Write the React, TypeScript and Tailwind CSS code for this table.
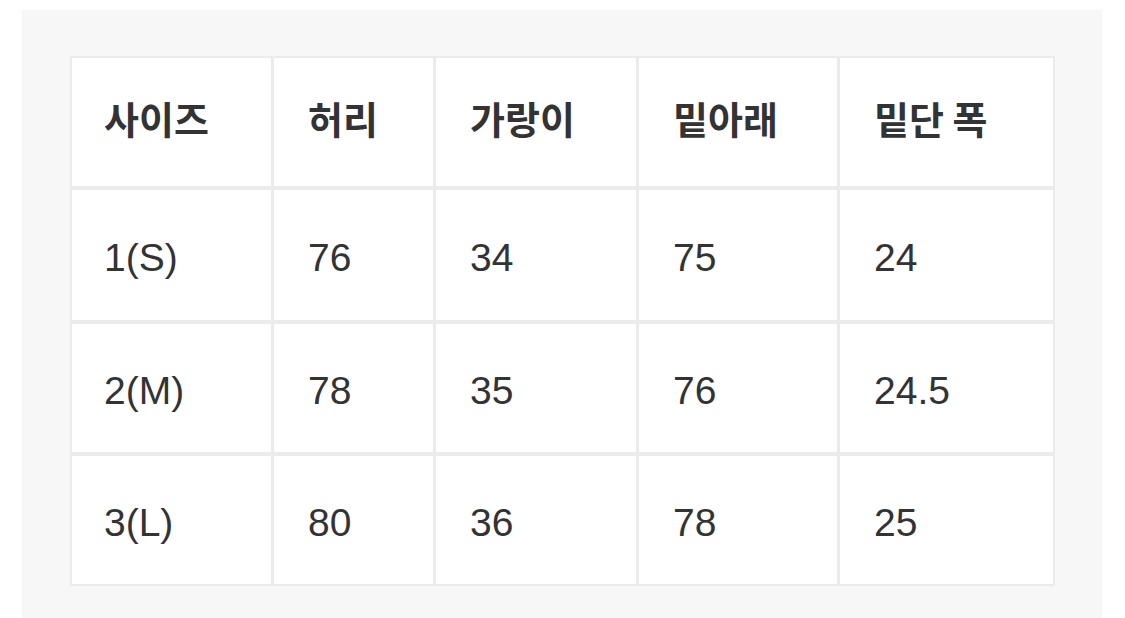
import React from "react";

const headers = ["사이즈", "허리", "가랑이", "밑아래", "밑단 폭"];
const rows = [
  ["1(S)", "76", "34", "75", "24"],
  ["2(M)", "78", "35", "76", "24.5"],
  ["3(L)", "80", "36", "78", "25"],
];

const font = { fontFamily: '"Liberation Sans", "Noto Sans CJK KR", sans-serif' };

export default function App() {
  return (
    <div className="min-h-screen bg-white pl-[22px] pt-[10px]" style={font}>
      <div className="w-[1080px] h-[620px] bg-[#f7f7f7] pl-[48px] pt-[46px]">
        <div className="grid w-[985px] grid-cols-[199px_159px_200px_198px_213px] grid-rows-[128px_130px_128px_128px] gap-x-[3px] gap-y-[4px] bg-[#ebebeb] p-[2px]">
          {headers.map((h, i) => (
            <div
              key={h}
              className={`flex items-center bg-white ${i === 0 ? "pl-[32px]" : "pl-[34px]"} pb-[10px] text-[38px] font-bold text-[#333333]`}
              style={{ fontFamily: '"Noto Sans CJK KR", sans-serif' }}
            >
              {h}
            </div>
          ))}
          {rows.map((r) =>
            r.map((c, i) => (
              <div
                key={r[0] + i}
                className={`flex items-center bg-white ${i === 0 ? "pl-[32px]" : "pl-[34px]"} pt-[6px] text-[39px] text-[#333333]`}
              >
                {c}
              </div>
            ))
          )}
        </div>
      </div>
    </div>
  );
}
